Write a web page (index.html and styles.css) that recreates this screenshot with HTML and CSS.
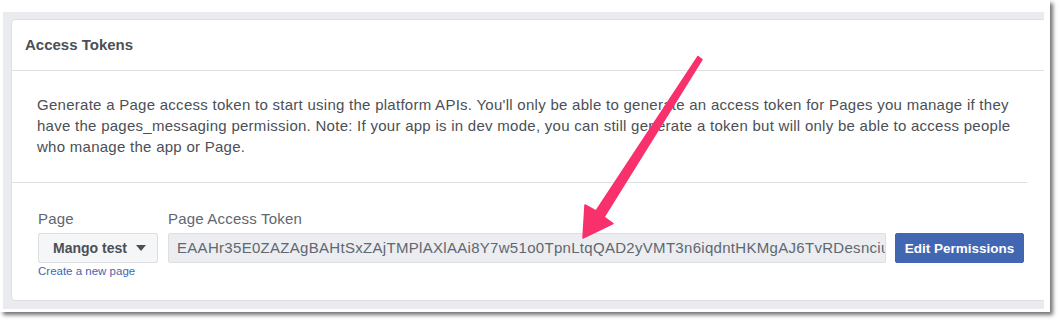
FILE: index.html
```html
<!DOCTYPE html>
<html>
<head>
	<meta charset="utf-8">
	<title>Access Tokens</title>
	<link rel="stylesheet" href="styles.css">
</head>
<body>
<div class="shot">
	<div class="frame">
		<div class="card">
			<div class="card-head">Access Tokens</div>
			<p class="intro">Generate a Page access token to start using the platform APIs. You'll only be able to generate an access token for Pages you manage if they have the pages_messaging permission. Note: If your app is in dev mode, you can still generate a token but will only be able to access people who manage the app or Page.</p>
			<div class="token-row">
				<div class="field field-page">
					<label>Page</label>
					<div class="select">Mango test <span class="caret"></span></div>
					<a href="#" class="new-page">Create a new page</a>
				</div>
				<div class="field field-token">
					<label>Page Access Token</label>
					<div class="token">EAAHr35E0ZAZAgBAHtSxZAjTMPlAXlAAi8Y7w51o0TpnLtqQAD2yVMT3n6iqdntHKMgAJ6TvRDesnciuZ</div>
				</div>
				<div class="field field-btn">
					<button class="btn">Edit Permissions</button>
				</div>
			</div>
		</div>
	</div>
</div>

<!-- callout arrow drawn over the screenshot -->
<svg class="arrow" width="1060" height="324" viewBox="0 0 1060 324">
	<polygon points="698,56.5 702,59.5 604,217 613,223.5 583,238 585,205 596,211" fill="#f8306c" stroke="#f8306c" stroke-width="1.5" stroke-linejoin="round"/>
</svg>
</body>
</html>
```

FILE: styles.css
```css
body {
  margin: 0;
  background: #fff;
  font-family: "Liberation Sans", Arial, sans-serif;
  position: relative;
  width: 1060px;
  height: 324px;
  overflow: hidden;
}

.shot {
  width: 1050px;
  height: 312px;
  background: #fff;
  box-shadow: 3px 3px 4px rgba(0, 0, 0, 0.55);
  padding: 12px 0 0 3px;
  box-sizing: border-box;
}

.frame {
  width: 1041px;
  height: 297px;
  background: #e9ebee;
  padding: 7px 0 0 8px;
  box-sizing: border-box;
  overflow: hidden;
}

.card {
  width: 1080px;
  height: 282px;
  background: #fff;
  border: 1px solid #dddfe2;
  border-radius: 4px;
  box-sizing: border-box;
}

.card-head {
  height: 51px;
  line-height: 50px;
  padding-left: 13px;
  border-bottom: 1px solid #dddfe2;
  box-sizing: border-box;
  font-size: 15px;
  font-weight: bold;
  color: #4b4f56;
}

.intro {
  margin: 0;
  width: 990px;
  padding: 23px 0 25px 25px;
  font-size: 15px;
  line-height: 21px;
  letter-spacing: 0.27px;
  color: #4b4f56;
  border-bottom: 1px solid #dddfe2;
}

.token-row {
  display: flex;
  align-items: flex-start;
  padding: 26px 0 0 26px;
}

.field label {
  display: block;
  font-size: 15px;
  line-height: 20px;
  letter-spacing: 0.2px;
  color: #606770;
  margin-bottom: 4px;
}

.field-page {
  width: 120px;
  margin-right: 10px;
}

.select {
  height: 30px;
  box-sizing: border-box;
  border: 1px solid #dddfe2;
  border-radius: 2px;
  background: #f5f6f7;
  font-size: 14px;
  font-weight: bold;
  color: #4b4f56;
  display: flex;
  align-items: center;
  justify-content: center;
  gap: 9px;
  padding-left: 3px;
}

.caret {
  width: 0;
  height: 0;
  border-left: 5px solid transparent;
  border-right: 5px solid transparent;
  border-top: 6px solid #4b4f56;
}

.new-page {
  display: block;
  font-size: 11.5px;
  line-height: 14px;
  color: #4267b2;
  text-decoration: none;
  margin-top: 1px;
}

.field-token {
  width: 718px;
  margin-right: 9px;
}

.token {
  height: 30px;
  line-height: 28px;
  box-sizing: border-box;
  border: 1px solid #dddfe2;
  border-radius: 2px;
  background: #ebedf0;
  font-size: 15px;
  letter-spacing: 0.3px;
  color: #606770;
  padding-left: 8px;
  white-space: nowrap;
  overflow: hidden;
}

.field-btn {
  padding-top: 24px;
}

.btn {
  height: 30px;
  width: 129px;
  padding: 0;
  border: 1px solid #4267b2;
  border-radius: 2px;
  background: #4267b2;
  color: #fff;
  font-family: "Liberation Sans", Arial, sans-serif;
  font-size: 13.5px;
  font-weight: bold;
}

.arrow {
  position: absolute;
  left: 0;
  top: 0;
  pointer-events: none;
}
```
